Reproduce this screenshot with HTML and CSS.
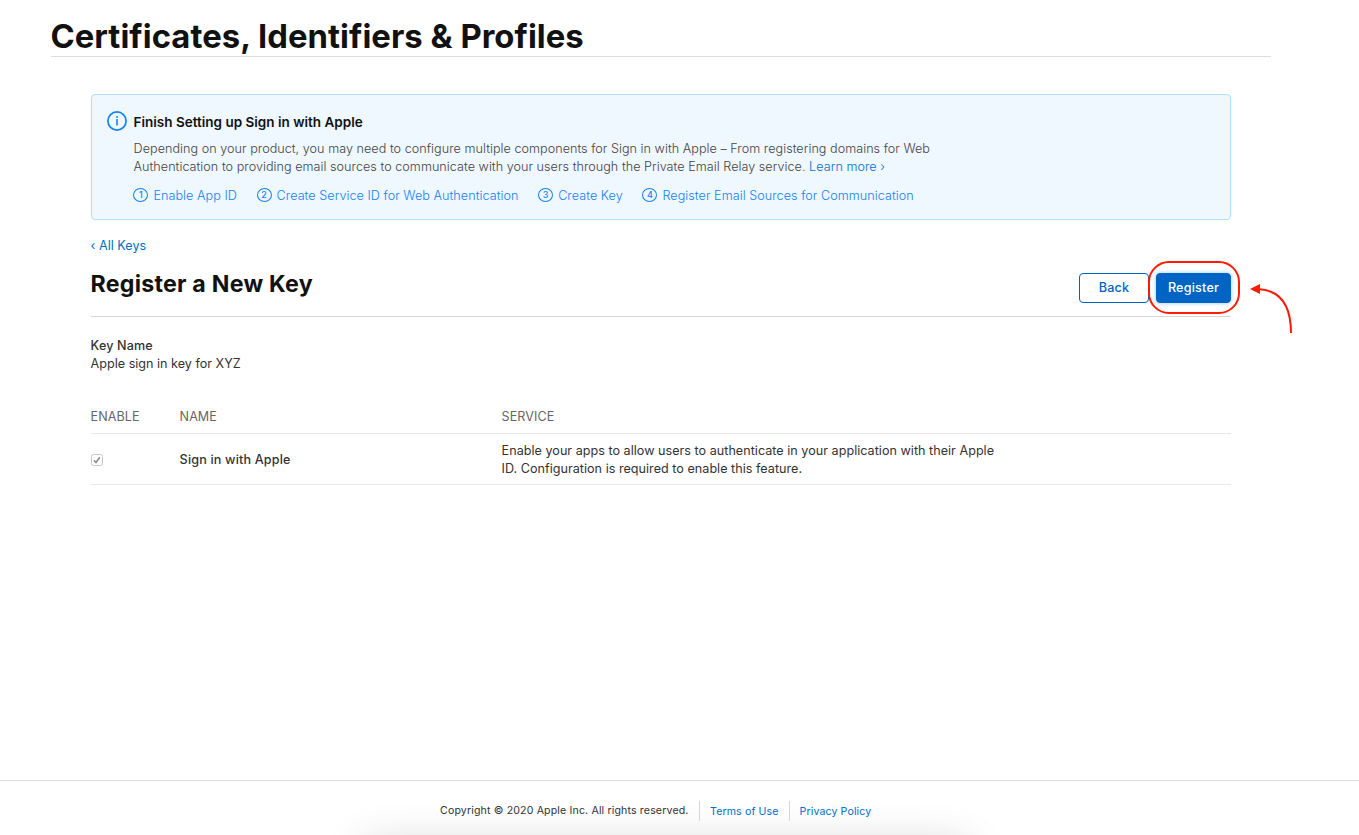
FILE: index.html
```html
<!DOCTYPE html>
<html lang="en">
<head>
<meta charset="utf-8">
<title>Certificates, Identifiers &amp; Profiles</title>
<link rel="stylesheet" href="styles.css">
</head>
<body>
<header class="masthead"><h1 class="masthead-title">Certificates, Identifiers &amp; Profiles</h1></header>
<main class="content">
  <section class="notice">
    <svg class="notice-icon" viewBox="0 0 20 20" fill="none" stroke="#1482f4"><circle cx="10" cy="10" r="9.1" stroke-width="1.7"/><path d="M10 8v6.4" stroke-width="1.6"/><circle cx="10" cy="5.9" r="1" fill="#1482f4" stroke="none"/></svg>
    <div class="notice-body">
      <h2 class="notice-title">Finish Setting up Sign in with Apple</h2>
      <p class="notice-text">Depending on your product, you may need to configure multiple components for Sign in with Apple – From registering domains for Web<br>Authentication to providing email sources to communicate with your users through the Private Email Relay service. <a class="link">Learn more ›</a></p>
      <nav class="steps">
        <a class="step"><i class="step-number">1</i>Enable App ID</a>
        <a class="step"><i class="step-number">2</i>Create Service ID for Web Authentication</a>
        <a class="step"><i class="step-number">3</i>Create Key</a>
        <a class="step"><i class="step-number">4</i>Register Email Sources for Communication</a>
      </nav>
    </div>
  </section>
  <a class="back-link link">‹ All Keys</a>
  <div class="toolbar">
    <h2 class="toolbar-title">Register a New Key</h2>
    <div class="actions">
      <button class="button">Back</button>
      <div class="callout">
        <button class="button button-primary">Register</button>
        <svg class="callout-mark" viewBox="0 0 150 80" fill="none" stroke="#fc1c06" stroke-width="2"><rect x="4" y="4" width="90" height="51" rx="20"/><path d="M113 31C132 32 146 44 146 75"/><path d="M105 31l10-5v10z" fill="#fc1c06" stroke="none"/></svg>
      </div>
    </div>
  </div>
  <dl class="detail"><dt>Key Name</dt><dd>Apple sign in key for XYZ</dd></dl>
  <div class="table">
    <div class="row row-head"><span class="enable">ENABLE</span><span>NAME</span><span>SERVICE</span></div>
    <div class="row">
      <svg class="check" viewBox="0 0 12 12" fill="none"><rect x=".5" y=".5" width="11" height="11" rx="2" stroke="#c6c6c6"/><path d="M3 6.3l2 2.2 3.8-5.3" stroke="#8c8c8c" stroke-width="1.6"/></svg>
      <strong class="name">Sign in with Apple</strong>
      <p class="service">Enable your apps to allow users to authenticate in your application with their Apple<br>ID. Configuration is required to enable this feature.</p>
    </div>
  </div>
</main>
<footer class="footer">
  <div class="footer-line"><span class="copyright">Copyright © 2020 Apple Inc. All rights reserved.</span><a class="footer-link">Terms of Use</a><a class="footer-link">Privacy Policy</a></div>
</footer>
</body>
</html>
```
FILE: styles.css
```css
* { box-sizing: border-box; }
body { margin: 0; height: 835px; overflow: hidden; display: flex; flex-direction: column; background: #fff; color: #333; font: 12.6px/18px Inter, sans-serif; }
h1, h2, p, dl, dd { margin: 0; }
.link { color: #0070c9; }
.masthead { width: 1220px; height: 57px; margin-left: 51px; padding-top: 15px; border-bottom: 1px solid #ddd; }
.masthead-title { margin-left: -.6px; font-size: 32.8px; line-height: 42px; letter-spacing: .05px; font-weight: 700; color: #111; white-space: nowrap; }
.content { width: 1140px; margin: 37px 0 0 91px; flex: 1; }
.notice { display: flex; gap: 6.6px; height: 126px; padding: 16px 15px; border: 1px solid #b5defb; border-radius: 4px; background: #eff7ff; }
.notice-icon { width: 20px; height: 20px; flex: none; }
.notice-title { font-size: 13.5px; line-height: 20px; font-weight: 600; color: #111; padding-top: 1px; }
.notice-text { margin-top: 8px; font-weight: 300; letter-spacing: .041px; color: #444; white-space: nowrap; }
.steps { display: flex; gap: 19.9px; margin-top: 11px; font-weight: 300; letter-spacing: .055px; color: #1482f4; }
.step { display: flex; align-items: center; gap: 5px; white-space: nowrap; }
.step-number { width: 15px; height: 14px; margin: 0 0 2px -.2px; border: 1px solid; border-radius: 50%; font: 500 9px/12px Inter, sans-serif; text-align: center; }
.back-link { display: block; margin: 17px 0 0 -.4px; }
.toolbar { display: flex; justify-content: space-between; height: 62px; border-bottom: 1px solid #d6d6d6; }
.toolbar-title { margin: 14px 0 0 -.4px; font-size: 23.2px; line-height: 30px; letter-spacing: .23px; color: #111; }
.actions { display: flex; gap: 7px; padding-top: 18px; }
.button { width: 70px; height: 30px; padding: 0 0 1px; border: 1px solid #0064c4; border-radius: 4px; background: #fff; color: #0064c4; font: 500 12.6px/27px Inter, sans-serif; letter-spacing: .2px; }
.callout { position: relative; }
.button-primary { width: 75px; background: #0064c4; color: #fff; box-shadow: 0 0 4px #8fc7f4; }
.callout-mark { position: absolute; left: -11px; top: -15px; width: 150px; height: 80px; }
.detail { margin: 20px 0 0 -.4px; }
.detail dt { font-weight: 500; letter-spacing: .13px; }
.table { margin-top: 35px; }
.row { display: grid; grid-template-columns: 88.6px 322px 1fr; align-items: center; height: 51px; border-bottom: 1px solid #e8e8e8; }
.row-head { height: 26px; align-items: start; color: #666; letter-spacing: .05px; }
.enable { margin-left: -.4px; }
.check { width: 12px; height: 12px; margin-top: 2px; }
.name { font-weight: 500; letter-spacing: .16px; padding-top: 2px; }
.service { white-space: nowrap; letter-spacing: .02px; padding-top: 2px; }
.footer { position: relative; height: 55px; overflow: hidden; border-top: 1px solid #ddd; font-size: 10.6px; }
.footer::after { content: ""; position: absolute; z-index: -1; left: 365px; top: 65px; width: 602px; height: 60px; box-shadow: 0 0 44px rgba(0, 0, 0, .19); }
.footer-line { display: flex; margin: 20px 0 0 440px; line-height: 20px; letter-spacing: .12px; }
.copyright { width: 249px; letter-spacing: .145px; white-space: nowrap; }
.footer-link { height: 20px; margin-left: 10px; padding: 1px 0 0 10px; border-left: 1px solid #d6d6d6; color: #0070c9; }
```
